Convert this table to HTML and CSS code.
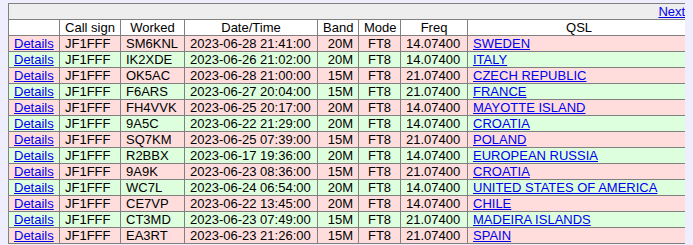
FILE: index.html
```html
<!DOCTYPE html>
<html>
<head>
<meta charset="utf-8">
<link rel="stylesheet" href="styles.css">
</head>
<body>
<table class="log">
  <colgroup>
    <col class="c-details"><col class="c-call"><col class="c-worked"><col class="c-date"><col class="c-band"><col class="c-mode"><col class="c-freq"><col class="c-qsl">
  </colgroup>
  <tr class="nav"><td colspan="8"><a href="#">Next</a></td></tr>
  <tr class="head"><th></th><th>Call sign</th><th>Worked</th><th>Date/Time</th><th>Band</th><th>Mode</th><th>Freq</th><th>QSL</th></tr>
  <tr class="odd"><td><a href="#">Details</a></td><td>JF1FFF</td><td>SM6KNL</td><td>2023-06-28 21:41:00</td><td class="r">20M</td><td class="c">FT8</td><td>14.07400</td><td><a href="#">SWEDEN</a></td></tr>
  <tr class="even"><td><a href="#">Details</a></td><td>JF1FFF</td><td>IK2XDE</td><td>2023-06-26 21:02:00</td><td class="r">20M</td><td class="c">FT8</td><td>14.07400</td><td><a href="#">ITALY</a></td></tr>
  <tr class="odd"><td><a href="#">Details</a></td><td>JF1FFF</td><td>OK5AC</td><td>2023-06-28 21:00:00</td><td class="r">15M</td><td class="c">FT8</td><td>21.07400</td><td><a href="#">CZECH REPUBLIC</a></td></tr>
  <tr class="even"><td><a href="#">Details</a></td><td>JF1FFF</td><td>F6ARS</td><td>2023-06-27 20:04:00</td><td class="r">15M</td><td class="c">FT8</td><td>21.07400</td><td><a href="#">FRANCE</a></td></tr>
  <tr class="odd"><td><a href="#">Details</a></td><td>JF1FFF</td><td>FH4VVK</td><td>2023-06-25 20:17:00</td><td class="r">20M</td><td class="c">FT8</td><td>14.07400</td><td><a href="#">MAYOTTE ISLAND</a></td></tr>
  <tr class="even"><td><a href="#">Details</a></td><td>JF1FFF</td><td>9A5C</td><td>2023-06-22 21:29:00</td><td class="r">20M</td><td class="c">FT8</td><td>14.07400</td><td><a href="#">CROATIA</a></td></tr>
  <tr class="odd"><td><a href="#">Details</a></td><td>JF1FFF</td><td>SQ7KM</td><td>2023-06-25 07:39:00</td><td class="r">15M</td><td class="c">FT8</td><td>21.07400</td><td><a href="#">POLAND</a></td></tr>
  <tr class="even"><td><a href="#">Details</a></td><td>JF1FFF</td><td>R2BBX</td><td>2023-06-17 19:36:00</td><td class="r">20M</td><td class="c">FT8</td><td>14.07400</td><td><a href="#">EUROPEAN RUSSIA</a></td></tr>
  <tr class="odd"><td><a href="#">Details</a></td><td>JF1FFF</td><td>9A9K</td><td>2023-06-23 08:36:00</td><td class="r">15M</td><td class="c">FT8</td><td>21.07400</td><td><a href="#">CROATIA</a></td></tr>
  <tr class="even"><td><a href="#">Details</a></td><td>JF1FFF</td><td>WC7L</td><td>2023-06-24 06:54:00</td><td class="r">20M</td><td class="c">FT8</td><td>14.07400</td><td><a href="#">UNITED STATES OF AMERICA</a></td></tr>
  <tr class="odd"><td><a href="#">Details</a></td><td>JF1FFF</td><td>CE7VP</td><td>2023-06-22 13:45:00</td><td class="r">20M</td><td class="c">FT8</td><td>14.07400</td><td><a href="#">CHILE</a></td></tr>
  <tr class="even"><td><a href="#">Details</a></td><td>JF1FFF</td><td>CT3MD</td><td>2023-06-23 07:49:00</td><td class="r">15M</td><td class="c">FT8</td><td>21.07400</td><td><a href="#">MADEIRA ISLANDS</a></td></tr>
  <tr class="odd"><td><a href="#">Details</a></td><td>JF1FFF</td><td>EA3RT</td><td>2023-06-23 21:26:00</td><td class="r">15M</td><td class="c">FT8</td><td>21.07400</td><td><a href="#">SPAIN</a></td></tr>
</table>
</body>
</html>
```
FILE: styles.css
```css
html {
  overflow: hidden;
  background: #eeeeff;
}
body {
  margin: 3px 8px;
  background: #eeeeff;
  font-family: "Liberation Sans", Arial, sans-serif;
  font-size: 13px;
  color: #000;
}
.log {
  border-collapse: collapse;
  table-layout: fixed;
  width: 682px;
  border: 1px solid #808080;
}
.log td, .log th {
  border: 1px solid #808080;
  padding: 0 5px;
  line-height: 15px;
  height: 15px;
  white-space: nowrap;
  overflow: hidden;
  text-align: left;
}
.log th {
  font-weight: normal;
  text-align: center;
}
.c-details { width: 51px; }
.c-call { width: 61px; }
.c-worked { width: 64px; }
.c-date { width: 133px; }
.c-band { width: 41px; }
.c-mode { width: 42px; }
.c-freq { width: 67px; }
.c-qsl { width: 223px; }
.nav td {
  background: #eeeeee;
  text-align: right;
}
.head th { background: #ffffff; }
.odd td { background: #ffdddd; }
.even td { background: #ddffdd; }
.log td.r { text-align: right; }
.log td.c { text-align: center; }
a { color: #0000ee; }
```
